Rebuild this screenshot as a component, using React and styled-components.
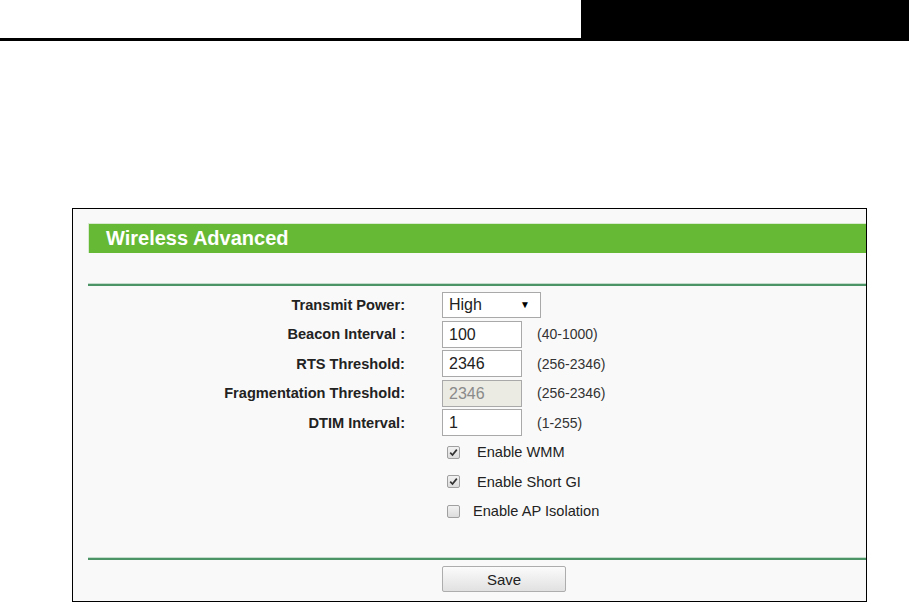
import styled, { createGlobalStyle } from 'styled-components';

const GlobalStyle = createGlobalStyle`
  html, body {
    margin: 0;
    padding: 0;
    background: #ffffff;
    font-family: "Liberation Sans", Arial, sans-serif;
  }
`;

const Page = styled.div`
  width: 909px;
  height: 603px;
  overflow: hidden;
  background: #fff;
`;

const TopBar = styled.div`
  display: flex;
  height: 38px;
  border-bottom: 3px solid #000;
`;

const TopBlank = styled.div`
  width: 581px;
`;

const TopBlack = styled.div`
  flex: 1;
  background: #000;
`;

const Panel = styled.div`
  box-sizing: border-box;
  margin: 167px 0 0 72px;
  width: 795px;
  border: 1px solid #000;
  background: #f9f9f9;
  padding: 14px 0 9px 15px;
`;

const Header = styled.div`
  height: 30px;
  box-sizing: border-box;
  background: #66b934;
  border-top: 1px solid #d8ebd0;
  border-left: 1px solid #d8ebd0;
  color: #fff;
  font-weight: bold;
  font-size: 20px;
  line-height: 28px;
  padding-left: 17px;
`;

const Divider = styled.div`
  height: 3px;
  margin-top: ${(p) => p.top}px;
  background: linear-gradient(#c3dccb 0 1px, #4c9465 1px 3px);
`;

const Form = styled.div`
  padding-top: 4px;
`;

const Row = styled.div`
  display: flex;
  align-items: center;
  height: 29.5px;
`;

const Label = styled.div`
  width: 317px;
  text-align: right;
  font-weight: bold;
  font-size: 14.6px;
  color: #222;
`;

const Field = styled.div`
  display: flex;
  align-items: center;
  margin-left: ${(p) => (p.indent ? 354 : 37)}px;
`;

const TextBox = styled.div`
  width: 80px;
  height: 27px;
  box-sizing: border-box;
  border: 1px solid #a9a9a9;
  background: ${(p) => (p.disabled ? '#ebebe4' : '#fff')};
  color: ${(p) => (p.disabled ? '#8a8a8a' : '#222')};
  font-size: 16px;
  line-height: 25px;
  padding-left: 6px;
`;

const SelectBox = styled(TextBox)`
  width: 99px;
  height: 26px;
  line-height: 24px;
  display: flex;
  justify-content: space-between;
  padding-right: 10px;
`;

const Arrow = styled.span`
  font-size: 10px;
  color: #000;
`;

const Range = styled.span`
  margin-left: 15px;
  font-size: 14px;
  color: #333;
`;

const Check = styled.span`
  width: 13px;
  height: 13px;
  box-sizing: border-box;
  margin-left: 5px;
  border: 1px solid #a0a0a0;
  border-radius: 2px;
  background: linear-gradient(#f2f2f2, #dcdcdc);
  display: flex;
  align-items: center;
  justify-content: center;
`;

const CheckText = styled.span`
  margin-left: ${(p) => p.gap}px;
  font-size: 14.6px;
  color: #222;
`;

const ButtonRow = styled.div`
  padding-top: 6px;
  padding-left: 354px;
`;

const SaveButton = styled.button`
  display: block;
  width: 124px;
  height: 26px;
  border: 1px solid #adadad;
  border-radius: 2px;
  background: linear-gradient(#fbfbfb, #e1e1e1);
  font-family: "Liberation Sans", Arial, sans-serif;
  font-size: 15px;
  color: #222;
  padding: 0;
`;

const fields = [
  { label: 'Transmit Power:', select: 'High' },
  { label: 'Beacon Interval :', value: '100', range: '(40-1000)' },
  { label: 'RTS Threshold:', value: '2346', range: '(256-2346)' },
  { label: 'Fragmentation Threshold:', value: '2346', range: '(256-2346)', disabled: true },
  { label: 'DTIM Interval:', value: '1', range: '(1-255)' },
];

const checks = [
  { text: 'Enable WMM', on: true, gap: 17 },
  { text: 'Enable Short GI', on: true, gap: 17 },
  { text: 'Enable AP Isolation', on: false, gap: 13 },
];

const Tick = () => (
  <svg width="9" height="9" viewBox="0 0 9 9">
    <path d="M1.2 4.6 L3.5 7 L7.8 1.6" fill="none" stroke="#333" strokeWidth="1.7" />
  </svg>
);

const App = () => {
  return (
    <Page>
      <GlobalStyle />
      <TopBar>
        <TopBlank />
        <TopBlack />
      </TopBar>
      <Panel>
        <Header>Wireless Advanced</Header>
        <Divider top={30} />
        <Form>
          {fields.map((f) => (
            <Row key={f.label}>
              <Label>{f.label}</Label>
              <Field>
                {f.select ? (
                  <SelectBox>
                    {f.select}
                    <Arrow>▼</Arrow>
                  </SelectBox>
                ) : (
                  <TextBox disabled={f.disabled}>{f.value}</TextBox>
                )}
                {f.range && <Range>{f.range}</Range>}
              </Field>
            </Row>
          ))}
          {checks.map((c) => (
            <Row key={c.text}>
              <Field indent>
                <Check>{c.on && <Tick />}</Check>
                <CheckText gap={c.gap}>{c.text}</CheckText>
              </Field>
            </Row>
          ))}
        </Form>
        <Divider top={31} />
        <ButtonRow>
          <SaveButton>Save</SaveButton>
        </ButtonRow>
      </Panel>
    </Page>
  );
};

export default App;
